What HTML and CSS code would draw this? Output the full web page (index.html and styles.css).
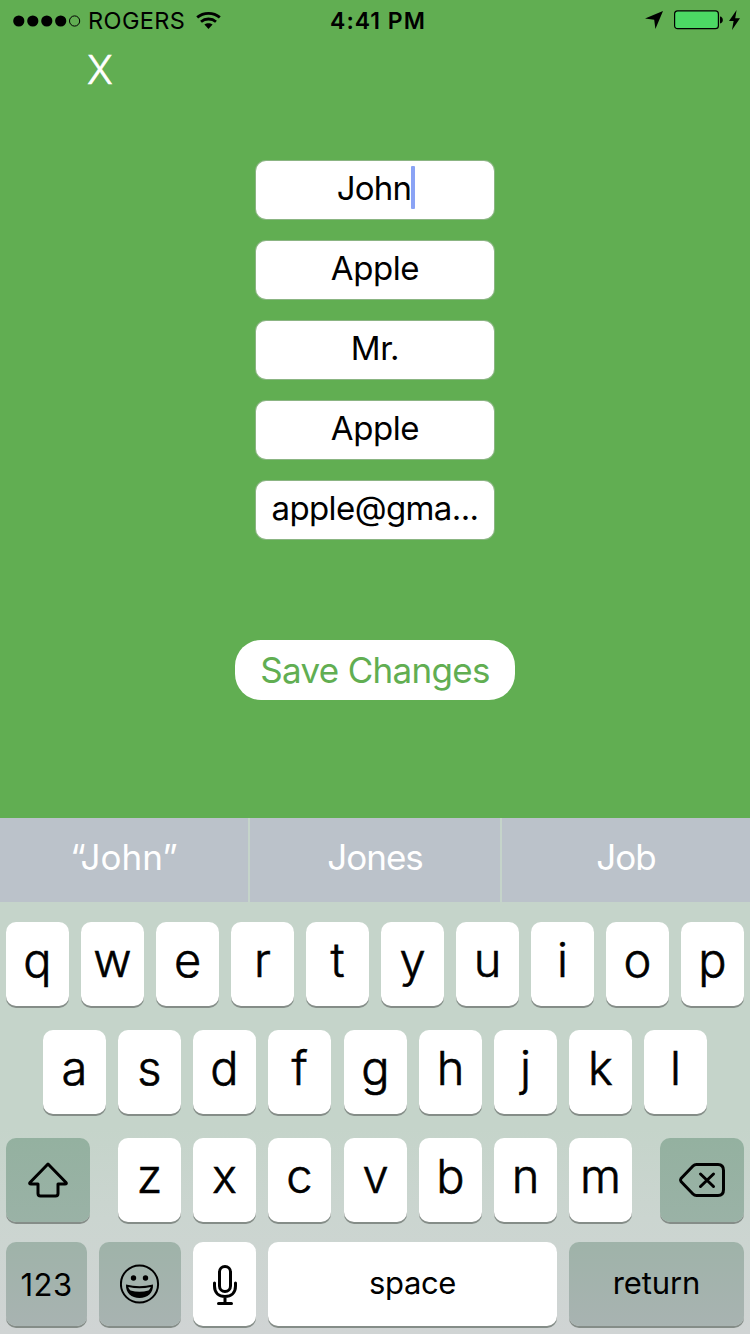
FILE: index.html
```html
<!DOCTYPE html>
<html lang="en">
<head>
<meta charset="utf-8">
<title>Edit Profile</title>
<link rel="stylesheet" href="styles.css">
</head>
<body>
<div class="screen">
  <header class="status">
    <div class="status-left">
      <svg class="signal" width="68" height="12" viewBox="0 0 68 12"><circle cx="5.8" cy="6" r="5.6"/><circle cx="19.8" cy="6" r="5.6"/><circle cx="33.8" cy="6" r="5.6"/><circle cx="47.7" cy="6" r="5.6"/><circle cx="61.6" cy="6" r="5.1" fill="none" stroke="#000"/></svg>
      <span class="carrier">ROGERS</span>
      <svg class="wifi" width="25" height="19" viewBox="0 0 25 19"><g fill="none" stroke="#000" stroke-width="2.800"><path d="M1.200 6.400C7.500.900 17.500.900 23.800 6.400"/><path d="M5 10.700C9.200 7.100 15.800 7.100 20 10.700"/></g><path d="M8.400 13.600C10.800 11.700 14.200 11.700 16.600 13.600L12.500 18Z"/></svg>
    </div>
    <div class="clock">4:41 PM</div>
    <div class="status-right">
      <svg class="location" width="18" height="18" viewBox="0 0 18 18"><path d="M18 0L10.4 18L9.2 8.8L0 7.6Z"/></svg>
      <svg class="battery" width="50" height="20" viewBox="0 0 50 20"><rect x=".6" y=".9" width="43.8" height="17.8" rx="3" fill="#4cd964" stroke="#000" stroke-width="1.2"/><path d="M46 6.5C49.8 6.8 49.8 13.2 46 13.5Z"/></svg>
      <svg class="bolt" width="11" height="20" viewBox="0 0 11 20"><path d="M7.6 0L0 11H4.6L3 20L11 8.2H6.2Z"/></svg>
    </div>
  </header>
  <div class="nav"><span class="close">X</span></div>
  <main class="form">
    <div class="field"><span class="john">John</span><i class="caret"></i></div>
    <div class="field">Apple</div>
    <div class="field">Mr.</div>
    <div class="field">Apple</div>
    <div class="field email">apple@gma...</div>
    <div class="save">Save Changes</div>
  </main>
  <section class="keyboard">
    <div class="suggestions"><div class="quoted">“John”</div><div>Jones</div><div>Job</div></div>
    <div class="keys">
      <div class="row"><b>q</b><b>w</b><b>e</b><b>r</b><b>t</b><b>y</b><b>u</b><b>i</b><b>o</b><b>p</b></div>
      <div class="row inset"><b>a</b><b>s</b><b>d</b><b>f</b><b class="mid">g</b><b>h</b><b>j</b><b>k</b><b>l</b></div>
      <div class="row split">
        <b class="dark"><svg width="40" height="36" viewBox="0 0 40 36"><path d="M20 2L38 20.5Q39 22 37 22H30V31.5Q30 34 27.500 34H12.500Q10 34 10 31.500V22H3Q1 22 2 20.500Z"/></svg></b>
        <div class="letters"><b>z</b><b>x</b><b>c</b><b class="mid">v</b><b>b</b><b>n</b><b>m</b></div>
        <b class="dark"><svg width="48" height="36" viewBox="0 0 48 36"><path d="M18.500 2.500H40Q45.500 2.500 45.500 8.500V27.500Q45.500 33.500 40 33.500H18.500Q16.500 33.500 15 32L3 19.500Q2 18 3 16.500L15 4Q16.500 2.500 18.500 2.500ZM22.500 12L35.500 24.500M35.500 12L22.500 24.500"/></svg></b>
      </div>
      <div class="row last">
        <b class="dark num">123</b>
        <b class="dark emoji"><svg width="40" height="40" viewBox="0 0 40 40"><circle cx="19.500" cy="20" r="18.600" stroke-width="2"/><g class="solid"><circle cx="13.500" cy="14" r="2.700"/><circle cx="25.500" cy="14" r="2.700"/><path fill-rule="evenodd" d="M6 20.500Q19.500 24 33 20.500C33.500 29 27.500 34 19.500 34S5.500 29 6 20.500ZM8.300 23C8.700 24.500 9.500 25.600 10.500 26.500Q19.500 29 28.500 26.500C29.500 25.600 30.300 24.500 30.700 23Q19.500 25.500 8.300 23Z"/></g></svg></b>
        <b class="mic"><svg width="24" height="40" viewBox="0 0 24 40"><rect x="6.500" y="1.500" width="11" height="25" rx="5.500"/><path d="M1.500 18V21C1.500 28 6 31.500 12 31.500S22.500 28 22.500 21V18M12 31.500V38M5.500 38.500H18.500" stroke-linecap="round"/></svg></b>
        <b class="space">space</b>
        <b class="dark return">return</b>
      </div>
    </div>
  </section>
</div>
</body>
</html>
```
FILE: styles.css
```css
* { box-sizing: border-box; }
body { margin: 0; font-family: Inter, "Liberation Sans", sans-serif; color: #000; }
svg { display: block; flex: none; }
.screen { width: 750px; height: 1334px; display: flex; flex-direction: column; background: #61ae52; overflow: hidden; }
.status { height: 40px; display: grid; grid-template-columns: 1fr auto 1fr; align-items: center; padding: 1px 10px 0 13px; font-size: 24px; line-height: 38px; }
.status-left, .status-right { display: flex; align-items: center; }
.carrier { margin-left: 7px; letter-spacing: 0.4px; font-size: 23.5px; }
.wifi { margin: -1px 0 0 11px; }
.clock { padding-left: 3px; font-weight: 600; font-size: 23px; letter-spacing: 1px; }
.status-right { justify-content: flex-end; }
.battery { margin: -1px 0 0 11px; }
.location { margin-top: -1px; }
.bolt { margin: -2px 0 0 5px; }
.nav { height: 121px; padding-left: 87px; }
.close { display: block; color: #fff; font-size: 39px; font-weight: 300; -webkit-text-stroke: 0.6px #fff; line-height: 60px; }
.form { height: 657px; display: flex; flex-direction: column; align-items: center; gap: 22px; }
.field { width: 238px; height: 58px; border-radius: 10px; background: #fff; box-shadow: 0 0 0 1px rgba(190, 190, 190, .45); display: flex; align-items: center; justify-content: center; padding-bottom: 5px; font-size: 33px; letter-spacing: -0.4px; white-space: nowrap; }
.john { letter-spacing: -0.8px; }
.email { letter-spacing: -0.6px; }
.caret { width: 4px; height: 43px; margin: 0 -2px 0 0; border-radius: 1px; background: #8aa3f5; }
.save { width: 280px; height: 60px; margin-top: 79px; border-radius: 26px; background: #fff; color: #61ae52; display: flex; align-items: center; justify-content: center; font-size: 35px; letter-spacing: -0.7px; }
.keyboard { height: 516px; background: linear-gradient(#c5d4ca 0, #c5d4ca 310px, #cbd5d0 400px, #d0d4d4 516px); }
.suggestions { height: 84px; display: grid; grid-template-columns: 248px 250px 248px; gap: 2px; color: #fff; font-size: 35px; letter-spacing: -1px; }
.suggestions div { background: #bbc2ca; display: flex; align-items: center; justify-content: center; padding-bottom: 7px; }
.suggestions .quoted { letter-spacing: 0; }
.keys { padding: 20px 6px 0; display: flex; flex-direction: column; }
.row { display: flex; gap: 12px; height: 84px; margin-bottom: 24px; }
.row.inset { padding-left: 37px; }
.row.split { justify-content: space-between; margin-bottom: 20px; }
.letters { display: flex; gap: 12px; }
.row b { width: 63px; height: 84px; flex: none; border-radius: 10px; background: #fff; box-shadow: 0 2px 0 #858d88; display: flex; align-items: center; justify-content: center; padding-bottom: 9px; font-size: 47px; font-weight: 300; -webkit-text-stroke: 0.6px #000; }
.row .mid { margin-left: 1px; }
.row .dark { width: 84px; padding: 0; background: linear-gradient(#94b1a0, #9ab2a6); }
.row svg { fill: none; stroke: #000; stroke-width: 3; stroke-linejoin: round; stroke-linecap: round; }
.row .solid { fill: #000; stroke: none; }
.row.last .dark { background: linear-gradient(#9fb3a9, #a8b3b1); }
.row.last b { font-size: 31px; font-weight: 400; -webkit-text-stroke: 0; }
.row .num { width: 81px; letter-spacing: 0.4px; }
.row .emoji { width: 82px; padding-bottom: 1px; }
.row .mic { padding: 2px 0 0; }
.row .space { width: 289px; padding-bottom: 3px; letter-spacing: -0.4px; }
.row .return { width: 175px; padding-bottom: 3px; letter-spacing: -0.1px; }
```
